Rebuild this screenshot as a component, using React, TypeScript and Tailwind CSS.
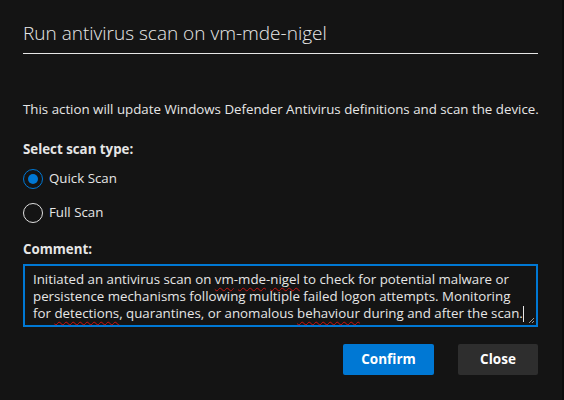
import React from 'react';

const font = { fontFamily: '"Segoe UI", "Open Sans", "Noto Sans", sans-serif' };

function Radio({ checked, label }: { checked?: boolean; label: string }) {
  return (
    <div className="flex items-center gap-[6px] h-[20px]">
      <span
        className={`w-[20px] h-[20px] rounded-full border flex items-center justify-center ${
          checked ? 'border-[#0078d4]' : 'border-[#e0e0e0]'
        }`}
      >
        {checked && <span className="w-[10px] h-[10px] rounded-full bg-[#0078d4]" />}
      </span>
      <span className="text-[13.3px] text-[#e6e6e6]">{label}</span>
    </div>
  );
}

const squiggle = 'underline decoration-wavy decoration-[#d01010] decoration-1 underline-offset-[3px]';

export default function App() {
  return (
    <div className="w-[564px] h-[400px] bg-[#141414] flex overflow-hidden" style={font}>
      <div className="flex-1 min-w-0 flex flex-col px-[23px]">
        <h1 className="mt-[20px] text-[19px] leading-[26px] font-light text-[#e8e8e8]">
          Run antivirus scan on vm-mde-nigel
        </h1>
        <div className="mt-[7px] h-px w-[515px] bg-[#e6e6e6]" />

        <p className="mt-[45px] text-[13.3px] leading-[20px] text-[#e6e6e6] whitespace-nowrap">
          This action will update Windows Defender Antivirus definitions and scan the device.
        </p>

        <div className="mt-[20px] text-[13.3px] leading-[20px] font-bold text-[#e6e6e6]">Select scan type:</div>
        <div className="mt-[10px] flex flex-col gap-[14px]">
          <Radio checked label="Quick Scan" />
          <Radio label="Full Scan" />
        </div>

        <div className="mt-[16px] text-[13.3px] leading-[20px] font-bold text-[#e6e6e6]">Comment:</div>

        <div className="relative mt-[5px] w-[515px] h-[63px] border-2 border-[#0078d4] bg-[#141414] px-[8px] pt-[5px] text-[13.3px] leading-[17px] text-[#e6e6e6]">
          Initiated an antivirus scan on <span className={squiggle}>vm</span>-<span className={squiggle}>mde</span>-
          <span className={squiggle}>nigel</span> to check for potential malware or persistence mechanisms following
          multiple failed logon attempts. Monitoring for <span className={squiggle}>detections</span>, quarantines, or
          anomalous <span className={squiggle}>behaviour</span> during and after the scan.
          <span className="inline-block w-px h-[16px] bg-[#e6e6e6] align-middle" />
          <svg className="absolute right-[1px] bottom-[1px]" width="7" height="7" viewBox="0 0 7 7">
            <path d="M6 1L1 6M6 4L4 6" stroke="#9a9a9a" strokeWidth="1" />
          </svg>
        </div>

        <div className="mt-[17px] w-[515px] flex justify-end gap-[24px]">
          <button className="w-[91px] h-[31px] rounded-[2px] bg-[#0078d4] text-white text-[13.5px] font-bold">
            Confirm
          </button>
          <button className="w-[80px] h-[31px] rounded-[2px] bg-[#2e2e2e] text-white text-[13.5px] font-bold">
            Close
          </button>
        </div>
      </div>
      <div className="w-[2px] bg-[#0c0c0c]" />
    </div>
  );
}
